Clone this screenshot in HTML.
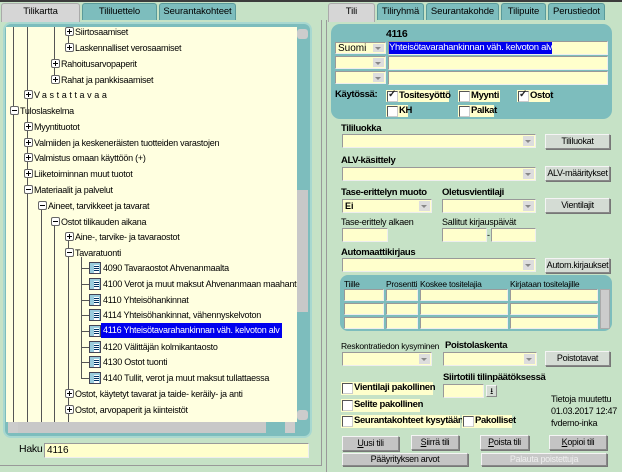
<!DOCTYPE html>
<html><head><meta charset="utf-8"><style>
*{margin:0;padding:0;box-sizing:border-box}
body{width:622px;height:472px;overflow:hidden;background:#c6e2c6;font-family:"Liberation Sans",sans-serif;font-size:9px;color:#000;position:relative}
.a{position:absolute}
.tab{position:absolute;top:3px;height:17px;background:#7dbdbd;border:1px solid #5a9a9a;border-bottom:none;border-radius:3px 3px 0 0;text-align:center;line-height:16px;font-size:9.5px;letter-spacing:-0.1px;white-space:nowrap}
.tab.sel{background:#d6d6d6;border-color:#aaa;height:19px}
.t{position:absolute;white-space:nowrap;font-size:9px;letter-spacing:-0.25px;line-height:12px}
.t.b{font-size:9.5px;letter-spacing:-0.35px}
.vl{position:absolute;width:1px;background:#555}
.hl{position:absolute;height:1px;background:#555}
.ex{position:absolute;width:9px;height:9px;border:1px solid #666;background:#fff;border-radius:2px}
.ex:before{content:"";position:absolute;left:1px;top:3px;width:5px;height:1px;background:#000}
.ex.p:after{content:"";position:absolute;left:3px;top:1px;width:1px;height:5px;background:#000}
.lf{position:absolute;width:12px;height:12px;border:1px solid #445;background:#9cd}
.lf:before{content:"";position:absolute;left:4px;top:2px;width:5px;height:6px;border-top:1px solid #fff;border-bottom:1px solid #fff;background:repeating-linear-gradient(#036 0 1px,#fff 1px 2px)}
.in{position:absolute;background:#ffffcc;border:1px solid #999;border-right-color:#eee;border-bottom-color:#eee;white-space:nowrap;overflow:hidden}
.sel2{position:absolute;background:#ffffcc;border:1px solid #999;border-right-color:#eee;border-bottom-color:#eee}
.sel2:after{content:"";position:absolute;right:1px;top:1px;bottom:1px;width:11px;background:#ddd}
.sel2 i{position:absolute;right:4px;top:50%;margin-top:-1px;border:3px solid transparent;border-top:3px solid #888;z-index:2}
.btn{position:absolute;background:#d4dcd4;border:1px solid #888;border-top-color:#f4f4f4;border-left-color:#f4f4f4;text-align:center;font-size:9px;letter-spacing:-0.3px;line-height:13px;box-shadow:1px 1px 0 #777;white-space:nowrap;overflow:hidden}
.b{font-weight:bold}
.cb{position:absolute;background:#ffffcc;font-weight:bold;font-size:9.5px;letter-spacing:-0.35px;line-height:12px;padding-left:13px;white-space:nowrap}
.cb:before{content:"";position:absolute;left:1px;top:1px;width:9px;height:9px;border:1px solid #555;border-right-color:#ccc;border-bottom-color:#ccc;background:#fff}
.cb.c:after{content:"\2713";position:absolute;left:2px;top:-1px;font-size:10px;color:#222}
</style></head><body>
<div class="a" style="left:0;top:0;width:622px;height:2px;background:#3c3c3c"></div>
<!-- left panel -->
<div class="tab sel" style="left:1px;width:79px">Tilikartta</div>
<div class="tab" style="left:82px;width:75px">Tililuettelo</div>
<div class="tab" style="left:159px;width:77px">Seurantakohteet</div>
<div class="a" style="left:0;top:20px;width:322px;height:446px;border:1px solid #999;border-top:none;border-left:none"></div>
<div class="a" style="left:3px;top:22px;width:309px;height:416px;background:#7dbdbd;border:2px solid #a8d8d0;border-radius:8px"></div>
<div class="a" style="left:6px;top:27px;width:291px;height:395px;background:#ffffe0;overflow:hidden">
 <div class="vl" style="left:7px;top:0;height:395px"></div>
 <div class="vl" style="left:21px;top:0;height:395px"></div>
 <div class="vl" style="left:35px;top:183px;height:212px"></div>
 <div class="vl" style="left:48px;top:0;height:52px"></div>
 <div class="vl" style="left:48px;top:198px;height:197px"></div>
 <div class="vl" style="left:62px;top:0;height:20px"></div>
 <div class="vl" style="left:62px;top:213px;height:182px"></div>
 <div class="vl" style="left:75px;top:230px;height:121px"></div>
</div>
<div class="a" style="left:6px;top:27px;width:291px;height:395px;overflow:hidden">
<div class="ex p" style="left:59px;top:0px"></div><div class="t" style="left:69px;top:-1px">Siirtosaamiset</div>
<div class="ex p" style="left:59px;top:16px"></div><div class="t" style="left:69px;top:15px">Laskennalliset verosaamiset</div>
<div class="ex p" style="left:45px;top:32px"></div><div class="t" style="left:55px;top:31px">Rahoitusarvopaperit</div>
<div class="ex p" style="left:45px;top:48px"></div><div class="t" style="left:55px;top:47px">Rahat ja pankkisaamiset</div>
<div class="ex p" style="left:18px;top:63px"></div><div class="t" style="left:28px;top:62px;letter-spacing:2.6px">Vastattavaa</div>
<div class="ex" style="left:4px;top:79px"></div><div class="t" style="left:14px;top:78px">Tuloslaskelma</div>
<div class="ex p" style="left:18px;top:95px"></div><div class="t" style="left:28px;top:94px">Myyntituotot</div>
<div class="ex p" style="left:18px;top:111px"></div><div class="t" style="left:28px;top:110px">Valmiiden ja keskeneräisten tuotteiden varastojen</div>
<div class="ex p" style="left:18px;top:126px"></div><div class="t" style="left:28px;top:125px">Valmistus omaan käyttöön (+)</div>
<div class="ex p" style="left:18px;top:142px"></div><div class="t" style="left:28px;top:141px">Liiketoiminnan muut tuotot</div>
<div class="ex" style="left:18px;top:158px"></div><div class="t" style="left:28px;top:157px">Materiaalit ja palvelut</div>
<div class="ex" style="left:32px;top:174px"></div><div class="t" style="left:42px;top:173px">Aineet, tarvikkeet ja tavarat</div>
<div class="ex" style="left:45px;top:190px"></div><div class="t" style="left:55px;top:189px">Ostot tilikauden aikana</div>
<div class="ex p" style="left:59px;top:205px"></div><div class="t" style="left:69px;top:204px">Aine-, tarvike- ja tavaraostot</div>
<div class="ex" style="left:59px;top:221px"></div><div class="t" style="left:69px;top:220px">Tavaratuonti</div>
<div class="hl" style="left:75px;top:241px;width:8px"></div><div class="lf" style="left:83px;top:235px"></div><div class="t" style="left:97px;top:235px">4090 Tavaraostot Ahvenanmaalta</div>
<div class="hl" style="left:75px;top:257px;width:8px"></div><div class="lf" style="left:83px;top:251px"></div><div class="t" style="left:97px;top:251px">4100 Verot ja muut maksut Ahvenanmaan maahantuon</div>
<div class="hl" style="left:75px;top:273px;width:8px"></div><div class="lf" style="left:83px;top:267px"></div><div class="t" style="left:97px;top:267px">4110 Yhteisöhankinnat</div>
<div class="hl" style="left:75px;top:288px;width:8px"></div><div class="lf" style="left:83px;top:282px"></div><div class="t" style="left:97px;top:282px">4114 Yhteisöhankinnat, vähennyskelvoton</div>
<div class="hl" style="left:75px;top:304px;width:8px"></div><div class="lf" style="left:83px;top:298px"></div><div class="t" style="left:95px;top:296px;background:#0000ee;color:#fff;padding:1px 2px 2px">4116 Yhteisötavarahankinnan väh. kelvoton alv</div>
<div class="hl" style="left:75px;top:320px;width:8px"></div><div class="lf" style="left:83px;top:314px"></div><div class="t" style="left:97px;top:314px">4120 Välittäjän kolmikantaosto</div>
<div class="hl" style="left:75px;top:335px;width:8px"></div><div class="lf" style="left:83px;top:329px"></div><div class="t" style="left:97px;top:329px">4130 Ostot tuonti</div>
<div class="hl" style="left:75px;top:351px;width:8px"></div><div class="lf" style="left:83px;top:345px"></div><div class="t" style="left:97px;top:345px">4140 Tullit, verot ja muut maksut tullattaessa</div>
<div class="ex p" style="left:59px;top:362px"></div><div class="t" style="left:69px;top:361px">Ostot, käytetyt tavarat ja taide- keräily- ja anti</div>
<div class="ex p" style="left:59px;top:378px"></div><div class="t" style="left:69px;top:377px">Ostot, arvopaperit ja kiinteistöt</div>
</div>
<!-- scrollbars -->
<div class="a" style="left:297px;top:27px;width:11px;height:395px;background:#7dbdbd"></div>
<div class="a" style="left:297px;top:29px;width:11px;height:10px;background:#ccc;border-radius:3px"></div>
<div class="a" style="left:297px;top:190px;width:11px;height:122px;background:#c8c8c8"></div>
<div class="a" style="left:297px;top:410px;width:11px;height:10px;background:#ccc;border-radius:3px"></div>
<div class="a" style="left:6px;top:422px;width:291px;height:11px;background:#7dbdbd"></div>
<div class="a" style="left:8px;top:422px;width:10px;height:11px;background:#ccc"></div>
<div class="a" style="left:18px;top:422px;width:248px;height:11px;background:#c8c8c8"></div>
<div class="a" style="left:285px;top:422px;width:10px;height:11px;background:#ccc"></div>
<div class="t" style="left:19px;top:443px;font-size:10.5px">Haku</div>
<div class="in" style="left:44px;top:443px;width:265px;height:15px;padding-left:2px;line-height:13px;font-size:10px">4116</div>
<!-- right panel -->
<div class="a" style="left:326px;top:20px;width:296px;height:452px;border-left:1px solid #999"></div>
<div class="tab sel" style="left:328px;width:47px">Tili</div>
<div class="tab" style="left:377px;width:47px">Tiliryhmä</div>
<div class="tab" style="left:426px;width:73px">Seurantakohde</div>
<div class="tab" style="left:501px;width:45px">Tilipuite</div>
<div class="tab" style="left:548px;width:57px">Perustiedot</div>
<div class="a" style="left:331px;top:24px;width:281px;height:95px;background:#7dbdbd;border-radius:9px"></div>
<div class="t b" style="left:386px;top:28px;font-size:10.5px">4116</div>
<div class="sel2" style="left:335px;top:42px;width:51px;height:12px;padding-left:2px;line-height:11px;font-size:10px">Suomi<i></i></div>
<div class="in" style="left:388px;top:41px;width:220px;height:14px"><span style="background:#00e;color:#fff;font-size:9.5px;letter-spacing:-0.3px;line-height:12px;display:inline-block">Yhteisötavarahankinnan väh. kelvoton alv</span></div>
<div class="sel2" style="left:335px;top:56px;width:51px;height:13px"><i></i></div>
<div class="in" style="left:388px;top:56px;width:220px;height:14px"></div>
<div class="sel2" style="left:335px;top:71px;width:51px;height:13px"><i></i></div>
<div class="in" style="left:388px;top:71px;width:220px;height:14px"></div>
<div class="t b" style="left:335px;top:89px">Käytössä:</div>
<div class="cb c" style="left:386px;top:90px;width:63px">Tositesyöttö</div>
<div class="cb" style="left:458px;top:90px;width:42px">Myynti</div>
<div class="cb c" style="left:517px;top:90px;width:33px">Ostot</div>
<div class="cb" style="left:386px;top:105px;width:22px">KH</div>
<div class="cb" style="left:458px;top:105px;width:36px">Palkat</div>

<div class="t b" style="left:341px;top:123px">Tililuokka</div>
<div class="sel2" style="left:342px;top:134px;width:194px;height:14px"><i></i></div>
<div class="btn" style="left:545px;top:134px;width:65px;height:15px">Tililuokat</div>
<div class="t b" style="left:341px;top:155px">ALV-käsittely</div>
<div class="sel2" style="left:342px;top:167px;width:194px;height:14px"><i></i></div>
<div class="btn" style="left:545px;top:166px;width:65px;height:15px">ALV-määritykset</div>
<div class="t b" style="left:341px;top:187px">Tase-erittelyn muoto</div>
<div class="t b" style="left:442px;top:187px">Oletusvientilaji</div>
<div class="sel2" style="left:342px;top:199px;width:90px;height:14px;padding-left:2px;line-height:12px;font-weight:bold">Ei<i></i></div>
<div class="sel2" style="left:442px;top:199px;width:94px;height:14px"><i></i></div>
<div class="btn" style="left:545px;top:198px;width:65px;height:15px">Vientilajit</div>
<div class="t" style="left:341px;top:216px">Tase-erittely alkaen</div>
<div class="t" style="left:442px;top:216px">Sallitut kirjauspäivät</div>
<div class="in" style="left:342px;top:228px;width:46px;height:14px"></div>
<div class="in" style="left:442px;top:228px;width:45px;height:14px"></div>
<div class="t" style="left:487px;top:229px">-</div>
<div class="in" style="left:491px;top:228px;width:45px;height:14px"></div>
<div class="t b" style="left:341px;top:247px">Automaattikirjaus</div>
<div class="sel2" style="left:342px;top:258px;width:194px;height:14px"><i></i></div>
<div class="btn" style="left:545px;top:258px;width:65px;height:15px">Autom.kirjaukset</div>
<div class="a" style="left:340px;top:275px;width:272px;height:56px;background:#7dbdbd;border-radius:8px"></div>
<div class="t" style="left:344px;top:278px;font-size:8.5px">Tiille</div>
<div class="t" style="left:386px;top:278px;font-size:8.5px">Prosentti</div>
<div class="t" style="left:420px;top:278px;font-size:8.5px">Koskee tositelajia</div>
<div class="t" style="left:510px;top:278px;font-size:8.5px">Kirjataan tositelajille</div>
<div class="in" style="left:344px;top:289px;width:40px;height:12px"></div><div class="in" style="left:386px;top:289px;width:32px;height:12px"></div><div class="in" style="left:420px;top:289px;width:88px;height:12px"></div><div class="in" style="left:510px;top:289px;width:88px;height:12px"></div>
<div class="in" style="left:344px;top:303px;width:40px;height:12px"></div><div class="in" style="left:386px;top:303px;width:32px;height:12px"></div><div class="in" style="left:420px;top:303px;width:88px;height:12px"></div><div class="in" style="left:510px;top:303px;width:88px;height:12px"></div>
<div class="in" style="left:344px;top:317px;width:40px;height:12px"></div><div class="in" style="left:386px;top:317px;width:32px;height:12px"></div><div class="in" style="left:420px;top:317px;width:88px;height:12px"></div><div class="in" style="left:510px;top:317px;width:88px;height:12px"></div>
<div class="a" style="left:600px;top:289px;width:10px;height:40px;background:#ccc;border:1px solid #aaa"></div>
<div class="t" style="left:341px;top:340px;font-size:8.5px">Reskontratiedon kysyminen</div>
<div class="t b" style="left:445px;top:340px">Poistolaskenta</div>
<div class="sel2" style="left:342px;top:352px;width:90px;height:14px"><i></i></div>
<div class="sel2" style="left:443px;top:352px;width:94px;height:14px"><i></i></div>
<div class="btn" style="left:545px;top:351px;width:65px;height:15px">Poistotavat</div>
<div class="t b" style="left:443px;top:372px">Siirtotili tilinpäätöksessä</div>
<div class="in" style="left:443px;top:384px;width:41px;height:14px"></div>
<div class="btn" style="left:486px;top:385px;width:11px;height:12px;font-size:9px;line-height:11px;box-shadow:none">&#x2B73;</div>
<div class="cb" style="left:341px;top:382px;width:92px;height:13px">Vientilaji pakollinen</div>
<div class="cb" style="left:341px;top:399px;width:79px;height:13px">Selite pakollinen</div>
<div class="cb" style="left:341px;top:415px;width:119px;height:13px">Seurantakohteet kysytään</div>
<div class="cb" style="left:462px;top:415px;width:50px;height:13px">Pakolliset</div>
<div class="t" style="left:551px;top:393px">Tietoja muutettu</div>
<div class="t" style="left:551px;top:405px">01.03.2017 12:47</div>
<div class="t" style="left:551px;top:417px">fvdemo-inka</div>
<div class="btn" style="left:342px;top:436px;width:57px;height:15px;background:#c4c4c4"><u>U</u>usi tili</div>
<div class="btn" style="left:411px;top:435px;width:48px;height:15px;background:#c4c4c4"><u>S</u>iirrä tili</div>
<div class="btn" style="left:480px;top:435px;width:49px;height:15px;background:#c4c4c4"><u>P</u>oista tili</div>
<div class="btn" style="left:549px;top:435px;width:58px;height:15px;background:#c4c4c4"><u>K</u>opioi tili</div>
<div class="btn" style="left:342px;top:453px;width:126px;height:13px;line-height:11px;background:#c4c4c4">Pääyrityksen arvot</div>
<div class="btn" style="left:481px;top:453px;width:126px;height:13px;line-height:11px;background:#c8c8c8;color:#eee">Palauta poistettuja</div>
</body></html>
